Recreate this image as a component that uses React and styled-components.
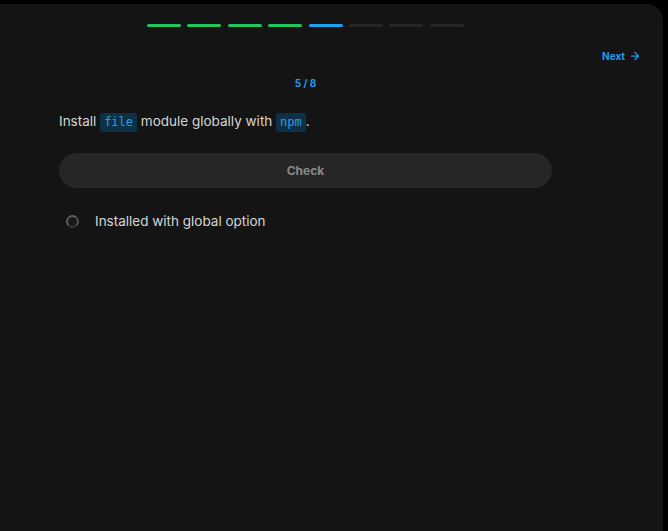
import styled, { createGlobalStyle } from "styled-components";

const GlobalStyle = createGlobalStyle`
  html, body {
    margin: 0;
    padding: 0;
    background: #000;
  }
  body {
    font-family: Inter, "Noto Sans", sans-serif;
  }
`;

const Panel = styled.div`
  box-sizing: border-box;
  width: 663px;
  height: 527px;
  margin-top: 4px;
  background: #141414;
  border-top-right-radius: 16px;
  padding: 20px 0 0 59px;
`;

const Progress = styled.div`
  display: flex;
  gap: 6.4px;
  margin-left: 88px;
  height: 3px;
`;

const Segment = styled.div`
  width: 34px;
  height: 3px;
  border-radius: 2px;
  background: ${(p) => p.$color};
`;

const TopRow = styled.div`
  display: flex;
  justify-content: flex-end;
  padding-right: 22px;
  margin-top: 23px;
`;

const NextButton = styled.button`
  display: flex;
  align-items: center;
  gap: 4px;
  border: none;
  background: none;
  padding: 0;
  color: #1d9bf0;
  font-family: Inter, sans-serif;
  font-weight: 700;
  font-size: 10px;
  cursor: pointer;
`;

const Counter = styled.div`
  width: 493px;
  text-align: center;
  margin-top: 15px;
  color: #1d9bf0;
  font-weight: 700;
  font-size: 10px;
`;

const Question = styled.p`
  margin: 21px 0 0;
  color: #d4d4d4;
  font-size: 13.5px;
  line-height: 22px;
`;

const Code = styled.code`
  font-family: "DejaVu Sans Mono", "Liberation Mono", monospace;
  font-size: 12px;
  color: #2d9ce0;
  background: #0d3247;
  padding: 2px 4px 3px;
  border-radius: 3px;
`;

const CheckButton = styled.button`
  display: block;
  width: 493px;
  height: 35px;
  margin-top: 20px;
  border: none;
  border-radius: 18px;
  background: #262626;
  color: #8a8a8a;
  font-family: Inter, sans-serif;
  font-weight: 700;
  font-size: 12px;
`;

const Option = styled.label`
  display: flex;
  align-items: center;
  gap: 16px;
  margin-top: 25px;
  padding-left: 7px;
  color: #d4d4d4;
  font-size: 13.5px;
`;

const Radio = styled.span`
  box-sizing: border-box;
  width: 13px;
  height: 13px;
  border-radius: 50%;
  border: 2.5px solid #4e4e4e;
  border-top-color: #5e5e5e;
  border-left-color: #5a5a5a;
  border-bottom-color: #363636;
  background: #191919;
`;

const segments = ["#22c55e", "#22c55e", "#22c55e", "#22c55e", "#1da1f2", "#262626", "#262626", "#262626"];

export default function App() {
  return (
    <>
      <GlobalStyle />
      <Panel>
        <Progress>
          {segments.map((c, i) => (
            <Segment key={i} $color={c} />
          ))}
        </Progress>
        <TopRow>
          <NextButton>
            Next
            <svg width="12" height="12" viewBox="0 0 24 24" fill="none" stroke="currentColor" strokeWidth="2.5" strokeLinecap="round" strokeLinejoin="round">
              <path d="M5 12h14" />
              <path d="m12 5 7 7-7 7" />
            </svg>
          </NextButton>
        </TopRow>
        <Counter>5 / 8</Counter>
        <Question>
          Install <Code>file</Code> module globally with <Code>npm</Code>.
        </Question>
        <CheckButton>Check</CheckButton>
        <Option>
          <Radio />
          Installed with global option
        </Option>
      </Panel>
    </>
  );
}
